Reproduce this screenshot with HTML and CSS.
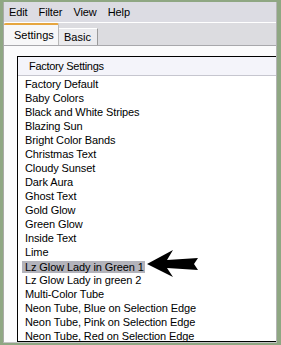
FILE: index.html
```html
<!DOCTYPE html>
<html>
<head>
<meta charset="utf-8">
<link rel="stylesheet" href="styles.css">
</head>
<body>
<div class="frame">
  <div class="window">
    <div class="menubar">
      <span class="menu m-edit">Edit</span>
      <span class="menu">Filter</span>
      <span class="menu">View</span>
      <span class="menu">Help</span>
    </div>
    <div class="tabstrip">
      <div class="tab active">Settings</div>
      <div class="tab">Basic</div>
    </div>
    <div class="panel">
      <div class="listbox">
        <div class="header">Factory Settings</div>
        <ul class="list">
          <li>Factory Default</li>
          <li>Baby Colors</li>
          <li>Black and White Stripes</li>
          <li>Blazing Sun</li>
          <li>Bright Color Bands</li>
          <li>Christmas Text</li>
          <li>Cloudy Sunset</li>
          <li>Dark Aura</li>
          <li>Ghost Text</li>
          <li>Gold Glow</li>
          <li>Green Glow</li>
          <li>Inside Text</li>
          <li>Lime</li>
          <li class="has-sel"><span class="sel">Lz Glow Lady in Green 1</span></li>
          <li>Lz Glow Lady in green 2</li>
          <li>Multi-Color Tube</li>
          <li>Neon Tube, Blue on Selection Edge</li>
          <li>Neon Tube, Pink on Selection Edge</li>
          <li>Neon Tube, Red on Selection Edge</li>
        </ul>
      </div>
    </div>
  </div>
  <svg class="arrow" width="281" height="345" viewBox="0 0 281 345">
    <polygon points="147,264 173,250 167,260 198,258 194,264 198,270 167,268 173,277" fill="#000"/>
  </svg>
</div>
</body>
</html>
```

FILE: styles.css
```css
html, body {
  margin: 0;
  padding: 0;
}
body {
  width: 281px;
  height: 345px;
  overflow: hidden;
  font-family: "Liberation Sans", Arial, sans-serif;
  font-size: 11px;
  color: #000;
}
.frame {
  position: relative;
  width: 281px;
  height: 345px;
  box-sizing: border-box;
  padding: 2px 4px 2px 3px;
  background: #8fa783;
}
.window {
  height: 341px;
  box-sizing: border-box;
  background: #dcdce3;
  border-left: 1px solid #a9aaa6;
  border-right: 1px solid #b4b4b4;
  border-bottom: 1px solid #c4c4c4;
  display: flex;
  flex-direction: column;
  overflow: hidden;
}
.menubar {
  height: 20px;
  border-bottom: 1px solid #ffffff;
  display: flex;
  align-items: center;
  gap: 11px;
  padding-left: 5px;
  letter-spacing: -0.1px;
}
.tabstrip {
  height: 22px;
  display: flex;
  align-items: flex-end;
  background: #dcdce0;
}
.tab {
  box-sizing: border-box;
  height: 17px;
  line-height: 16px;
  padding: 0 6px 0 5px;
  background: #ebebee;
  border-top: 1px solid #ffffff;
  border-right: 1px solid #9a9a9a;
}
.tab.active {
  height: 22px;
  line-height: 20px;
  width: 55px;
  padding-left: 10px;
  background: #f7f7f8;
  border-top: 2px solid #e6a640;
  border-right: 1px solid #b9b9b9;
  border-radius: 2px 2px 0 0;
}
.panel {
  flex: 1;
  background: #fbfbfc;
  border-top: 1px solid #a8a8ac;
  padding: 10px 0 0 13px;
  display: flex;
  flex-direction: column;
}
.listbox {
  height: 286px;
  box-sizing: border-box;
  border-top: 1px solid #000;
  border-left: 1px solid #000;
  border-bottom: 1px solid #000;
  background: #ffffff;
  overflow: hidden;
}
.header {
  height: 18px;
  line-height: 18px;
  background: #f4f4fa;
  border-bottom: 1px solid #c6c6cf;
  padding-left: 11px;
  letter-spacing: -0.3px;
}
.list {
  list-style: none;
  margin: 0;
  padding: 1px 0 0 0;
}
.list li {
  height: 14px;
  line-height: 14px;
  padding-left: 7px;
  white-space: nowrap;
  letter-spacing: -0.1px;
}
.list li.has-sel {
  padding-left: 4px;
}
.sel {
  display: inline-block;
  line-height: 12px;
  margin-top: 2px;
  padding: 0 1px 0 3px;
  background: #b3b3bb;
  vertical-align: top;
}
.arrow {
  position: absolute;
  left: 0;
  top: 0;
  pointer-events: none;
}
```
